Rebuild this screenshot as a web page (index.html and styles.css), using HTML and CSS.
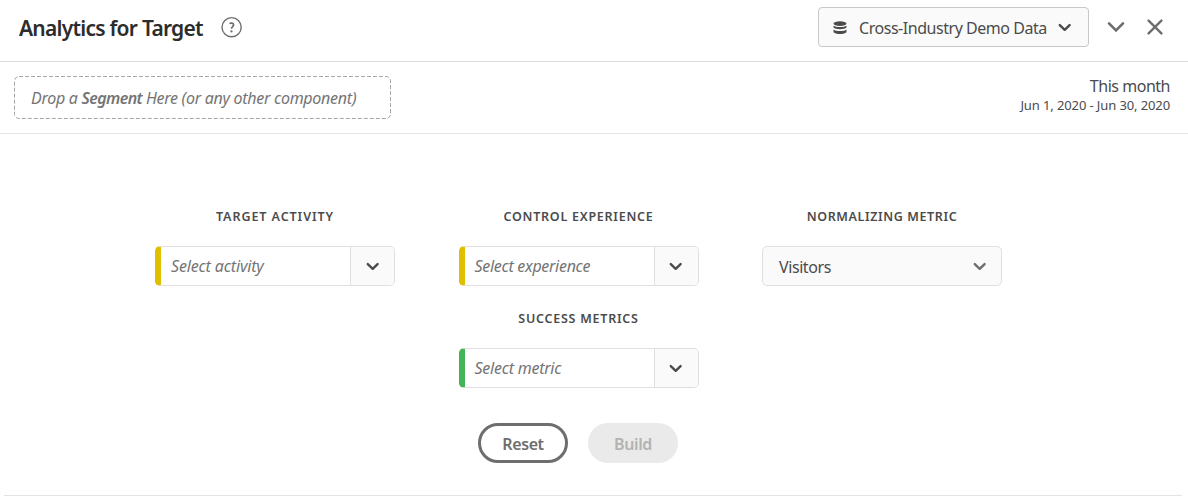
FILE: index.html
```html
<!DOCTYPE html>
<html lang="en">
<head>
<meta charset="utf-8">
<title>Analytics for Target</title>
<link rel="stylesheet" href="styles.css">
</head>
<body>
<svg class="defs" width="0" height="0" aria-hidden="true">
  <symbol id="chevron" viewBox="0 0 14 9"><path d="M1.8 2.1 6.7 6.8l4.9-4.7" fill="none" stroke="currentColor" stroke-width="2.4" stroke-linecap="round" stroke-linejoin="round"/></symbol>
</svg>
<header class="panel-header">
  <h1 class="title"><span class="t t-title">Analytics for Target</span></h1>
  <svg class="help" width="22" height="22" viewBox="0 0 22 22" role="img" aria-label="Help"><circle cx="10.6" cy="11.2" r="9.6" fill="none" stroke="currentColor" stroke-width="1.4"/><path d="M8.5 7.6c1-.8 4.1-1 4.1 1.2 0 1.7-2.2 2-2.1 4" fill="none" stroke="currentColor" stroke-width="1.7"/><circle cx="10.5" cy="15.4" r="1.15" fill="currentColor"/></svg>
  <button class="suite">
    <svg class="data-icon" width="14" height="14" viewBox="0 0 14 14"><ellipse cx="7" cy="2.6" rx="6.5" ry="2.3" fill="currentColor"/><path d="M.5 4.4c2 2 11 2 13 0v2.1c-2 2.3-11 2.3-13 0zM.5 8.5c2 2 11 2 13 0v2.4c-2 2.7-11 2.7-13 0z" fill="currentColor"/></svg>
    <span class="t t-suite">Cross-Industry Demo Data</span>
    <svg class="chev" width="14" height="9"><use href="#chevron"/></svg>
  </button>
  <svg class="collapse" width="18" height="12" viewBox="0 0 18 12"><path d="M2 2.3l7 7 7-7" fill="none" stroke="currentColor" stroke-width="2.6" stroke-linecap="round"/></svg>
  <svg class="close" width="16" height="16" viewBox="0 0 16 16"><path d="M1.6 1.6l12.8 12.8M14.4 1.6L1.6 14.4" fill="none" stroke="currentColor" stroke-width="2.4" stroke-linecap="round"/></svg>
</header>
<section class="segment-bar">
  <div class="drop-zone"><svg class="dashes" width="377" height="43"><rect x=".5" y=".5" width="376" height="42" rx="4.5" fill="none" stroke="#a6a6a6" stroke-dasharray="4 2"/></svg><span class="t t-drop">Drop a <b>Segment</b> Here (or any other component)</span></div>
  <div class="dates"><span class="t t-month">This month</span><span class="t t-range">Jun 1, 2020 - Jun 30, 2020</span></div>
</section>
<main class="builder">
  <div class="field"><label><span class="t t-l1">TARGET ACTIVITY</span></label>
    <div class="combo yellow"><span class="value"><span class="t t-activity">Select activity</span></span><span class="toggle"><svg class="chev" width="14" height="9"><use href="#chevron"/></svg></span></div></div>
  <div class="field"><label><span class="t t-l2">CONTROL EXPERIENCE</span></label>
    <div class="combo yellow"><span class="value"><span class="t t-exp">Select experience</span></span><span class="toggle"><svg class="chev" width="14" height="9"><use href="#chevron"/></svg></span></div></div>
  <div class="field"><label><span class="t t-l3">NORMALIZING METRIC</span></label>
    <div class="select"><span class="t t-vis">Visitors</span><svg class="chev" width="14" height="9"><use href="#chevron"/></svg></div></div>
  <div class="field second"><label><span class="t t-l4">SUCCESS METRICS</span></label>
    <div class="combo green"><span class="value"><span class="t t-metric">Select metric</span></span><span class="toggle"><svg class="chev" width="14" height="9"><use href="#chevron"/></svg></span></div></div>
</main>
<div class="actions"><button class="btn reset"><span class="t t-reset">Reset</span></button><button class="btn build" disabled><span class="t t-build">Build</span></button></div>
<hr class="end">
</body>
</html>
```
FILE: styles.css
```css
* { box-sizing: border-box; }
body { margin: 0; height: 501px; overflow: hidden; background: #fff; color: #4b4b4b; font-family: "Noto Sans", "Open Sans", sans-serif; font-size: 16px; }
button { font: inherit; color: inherit; }
.defs { display: block; height: 0; }
.t { white-space: nowrap; line-height: 20px; }
.panel-header { display: flex; align-items: center; height: 62px; padding: 0 23px 7px 19px; border-bottom: 1px solid #dcdcdc; }
.title { width: 184px; margin: 2px 18px 0 0; font-size: 21px; font-weight: 600; color: #2c2c2c; line-height: 26px; }
.t-title { letter-spacing: -.75px; }
.help { color: #6e6e6e; }
.suite { display: flex; align-items: center; width: 271px; height: 40px; margin-left: auto; padding: 1px 16px 0 14px; border: 1px solid #c8c8c8; border-radius: 4px; background: #fafafa; }
.data-icon { margin-right: 12px; }
.t-suite { letter-spacing: -.46px; }
.suite .chev { margin-left: auto; }
.collapse { margin-left: 18px; color: #6e6e6e; }
.close { margin-left: 22px; margin-right: 2px; color: #6e6e6e; }
.segment-bar { display: flex; justify-content: space-between; height: 72px; padding: 14px 18px 0 14px; border-bottom: 1px solid #e4e4e4; }
.drop-zone { position: relative; display: flex; align-items: center; width: 377px; height: 43px; padding-left: 17px; color: #747474; font-style: italic; }
.dashes { position: absolute; inset: 0; }
.t-drop { letter-spacing: -.28px; }
.t-drop b { font-weight: 600; letter-spacing: -.6px; }
.dates { display: flex; flex-direction: column; align-items: flex-end; }
.t-month { letter-spacing: -.48px; }
.t-range { font-size: 13px; line-height: 18px; letter-spacing: -.11px; }
.builder { display: grid; grid-template-columns: 240px 240px 240px; column-gap: 63.5px; row-gap: 24px; padding: 74px 0 0 155px; }
.second { grid-column: 2; }
.field label { display: block; height: 38px; font-size: 12.5px; font-weight: 600; text-align: center; line-height: 18px; }
.field .t { line-height: 18px; }
.t-l1 { letter-spacing: .93px; }
.t-l2, .t-l4 { letter-spacing: .75px; }
.t-l3 { letter-spacing: .6px; }
.t-activity { letter-spacing: -.16px; }
.t-exp { letter-spacing: -.3px; }
.t-metric { letter-spacing: -.25px; }
.t-vis { letter-spacing: -.42px; }
.t-reset { letter-spacing: -.4px; }
.t-build { letter-spacing: -.35px; }
.combo { display: flex; height: 40px; border: 1px solid #e0e0e0; border-left: 6px solid #dfbf00; border-radius: 5px; overflow: hidden; }
.green { border-left-color: #44b556; }
.value { flex: 1; display: flex; align-items: center; padding-left: 10px; font-style: italic; color: #747474; }
.toggle { display: flex; align-items: center; justify-content: center; width: 44px; border-left: 1px solid #e0e0e0; background: #fafafa; }
.select { display: flex; align-items: center; justify-content: space-between; height: 40px; padding: 1px 14px 0 16px; border: 1px solid #e0e0e0; border-radius: 5px; background: #fafafa; }
.select .chev { margin-top: -1px; color: #6e6e6e; }
.actions { display: flex; gap: 20px; padding: 35px 0 0 478px; }
.btn { width: 90px; height: 40px; padding: 2px 0 0; border-radius: 20px; text-align: center; font-weight: 600; }
.reset { border: 3px solid #6e6e6e; background: #fff; color: #6e6e6e; }
.build { border: 0; background: #eaeaea; color: #b3b3b3; }
.end { height: 1px; margin: 32px 6px 0 4px; border: 0; background: #e4e4e4; }
```
